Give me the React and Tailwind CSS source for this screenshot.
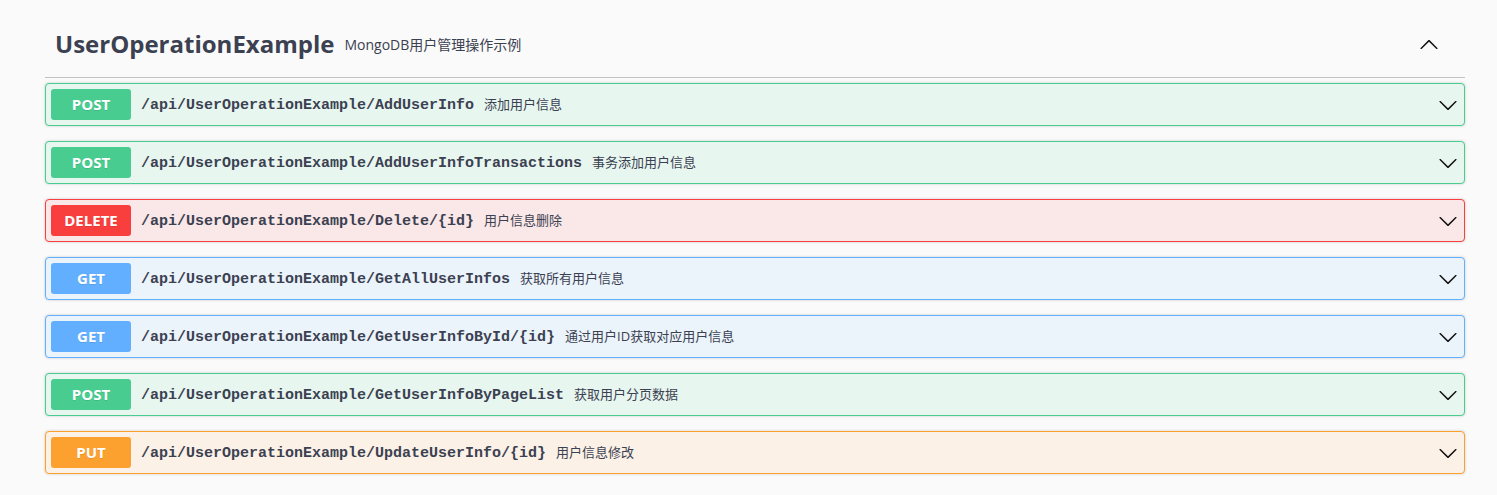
import React from "react";

const ops = [
  { m: "POST", path: "/api/UserOperationExample/AddUserInfo", d: "添加用户信息" },
  { m: "POST", path: "/api/UserOperationExample/AddUserInfoTransactions", d: "事务添加用户信息" },
  { m: "DELETE", path: "/api/UserOperationExample/Delete/{id}", d: "用户信息删除" },
  { m: "GET", path: "/api/UserOperationExample/GetAllUserInfos", d: "获取所有用户信息" },
  { m: "GET", path: "/api/UserOperationExample/GetUserInfoById/{id}", d: "通过用户ID获取对应用户信息" },
  { m: "POST", path: "/api/UserOperationExample/GetUserInfoByPageList", d: "获取用户分页数据" },
  { m: "PUT", path: "/api/UserOperationExample/UpdateUserInfo/{id}", d: "用户信息修改" },
];

const styles = {
  POST: { block: "border-[#49cc90] bg-[#e8f6f0]", badge: "bg-[#49cc90]" },
  DELETE: { block: "border-[#f93e3e] bg-[#fae7e7]", badge: "bg-[#f93e3e]" },
  GET: { block: "border-[#61affe] bg-[#ebf3fb]", badge: "bg-[#61affe]" },
  PUT: { block: "border-[#fca130] bg-[#fbf1e6]", badge: "bg-[#fca130]" },
};

const sans = { fontFamily: '"Open Sans", "Noto Sans CJK SC", sans-serif' };

function ChevronDown() {
  return (
    <svg width="20" height="20" viewBox="0 0 20 20" className="shrink-0">
      <path
        fill="#111"
        d="M17.418 6.109c.272-.268.709-.268.979 0s.271.701 0 .969l-7.908 7.83c-.27.268-.707.268-.979 0l-7.908-7.83c-.27-.268-.27-.701 0-.969.271-.268.709-.268.979 0L10 13.25l7.418-7.141z"
      />
    </svg>
  );
}

function ChevronUp() {
  return (
    <svg width="20" height="20" viewBox="0 0 20 20" className="shrink-0">
      <path
        fill="#111"
        d="M17.418 14.908c.272.268.709.268.979 0s.271-.701 0-.969l-7.908-7.83c-.27-.268-.707-.268-.979 0l-7.908 7.83c-.27.268-.27.701 0 .969.271.268.709.268.979 0L10 7.767l7.418 7.141z"
      />
    </svg>
  );
}

export default function App() {
  return (
    <div className="min-h-[495px] bg-[#fafafa]" style={sans}>
      <div className="ml-[45px] w-[1420px] pt-[11px]">
        <div className="flex h-[67px] items-center border-b border-[rgba(59,65,81,0.3)] pl-[10px] pr-[26px]">
          <span
            className="pb-[1px] text-[24px] font-bold text-[#3b4151]"
            style={{ fontFamily: '"Open Sans", sans-serif' }}
          >
            UserOperationExample
          </span>
          <span className="ml-[10px] flex-1 pt-[1px] text-[14px] text-[#3b4151]">
            MongoDB用户管理操作示例
          </span>
          <ChevronUp />
        </div>
        <div className="mt-[5px] flex flex-col gap-[15px]">
          {ops.map((o, i) => (
            <div
              key={i}
              className={`flex h-[43px] items-center rounded-[4px] border px-[5px] shadow-[0_0_3px_rgba(0,0,0,0.19)] ${styles[o.m].block}`}
            >
              <div
                className={`flex h-[31px] w-[80px] shrink-0 items-center justify-center rounded-[3px] text-[15px] font-bold text-white ${styles[o.m].badge}`}
                style={{ textShadow: "0 1px 0 rgba(0,0,0,0.1)", fontFamily: '"Open Sans", sans-serif' }}
              >
                {o.m}
              </div>
              <span
                className="px-[10px] pt-[3px] text-[15px] font-bold text-[#3b4151]"
                style={{ fontFamily: '"Liberation Mono", monospace' }}
              >
                {o.path}
              </span>
              <span className="flex-1 pt-[1px] text-[13px] text-[#3b4151]">{o.d}</span>
              <div className="mr-[1px]">
                <ChevronDown />
              </div>
            </div>
          ))}
        </div>
      </div>
    </div>
  );
}
